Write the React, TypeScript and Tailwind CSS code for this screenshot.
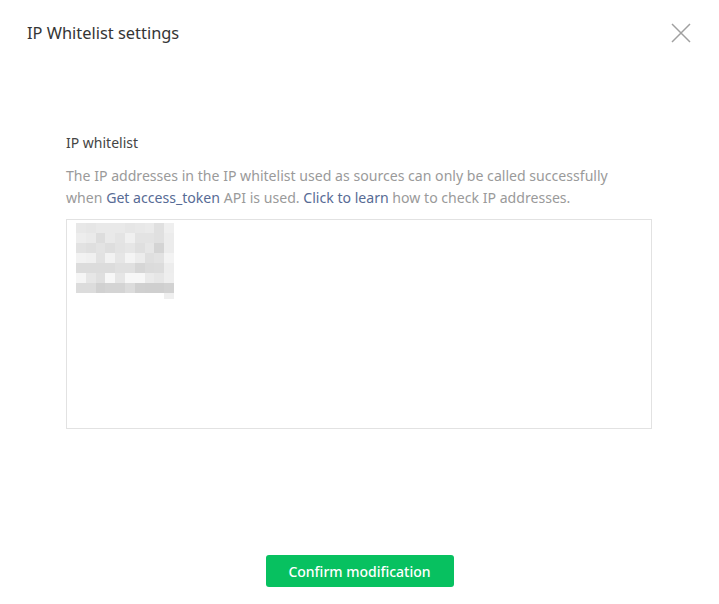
import React from "react";

const cells: string[][] = [
  ["#e8e8e8", "#e6e6e6", "#e9e9e9", "#e9e9e9", "#e9e9e9", "#e6e6e6", "#e8e8e8", "#eaeaea", "#e0e0e0", "#efefef"],
  ["#ededed", "#eaeaea", "#dddddd", "#e9e9e9", "#e4e4e4", "#f0f0f0", "#e3e3e3", "#e3e3e3", "#e0e0e0", "#ececec"],
  ["#e2e2e2", "#dfdfdf", "#e3e3e3", "#dedede", "#e3e3e3", "#e6e6e6", "#dfdfdf", "#e6e6e6", "#d4d4d4", "#ececec"],
  ["#f2f2f2", "#f0f0f0", "#e2e2e2", "#f2f2f2", "#e6e6e6", "#f4f4f4", "#ececec", "#dfdfdf", "#e2e2e2", "#f3f3f3"],
  ["#dcdcdc", "#dcdcdc", "#dcdcdc", "#dcdcdc", "#e0e0e0", "#e0e0e0", "#d6d6d6", "#dbdbdb", "#dcdcdc", "#ededed"],
  ["#f5f5f5", "#e6e6e6", "#dfdfdf", "#f7f7f7", "#e6e6e6", "#f7f7f7", "#f7f7f7", "#eaeaea", "#e6e6e6", "#eeeeee"],
  ["#dcdcdc", "#dcdcdc", "#d1d1d1", "#d4d4d4", "#d4d4d4", "#dcdcdc", "#d0d0d0", "#cfcfcf", "#cfcfcf", "#d2d2d2"],
];

function Mosaic() {
  return (
    <div className="flex flex-col">
      {cells.map((row, i) => (
        <div key={i} className="flex h-[10px]">
          {row.map((c, j) => (
            <div key={j} className="h-full w-[9.8px]" style={{ backgroundColor: c }} />
          ))}
        </div>
      ))}
      <div className="flex h-[6px]">
        <div className="w-[88.2px]" />
        <div className="h-full w-[9.8px] bg-[#efefef]" />
      </div>
    </div>
  );
}

export default function App() {
  return (
    <div
      className="relative h-[604px] w-[719px] bg-white"
      style={{ fontFamily: '"Noto Sans", "Open Sans", sans-serif' }}
    >
      <div className="flex h-[66px] items-center justify-between pl-[27px] pr-[28px]">
        <h1 className="text-[16.4px] font-normal text-[#353535]">IP Whitelist settings</h1>
        <svg width="20" height="20" viewBox="0 0 20 20" className="text-[#a0a0a0]">
          <path d="M1 1 L19 19 M19 1 L1 19" stroke="currentColor" strokeWidth="1.5" fill="none" />
        </svg>
      </div>
      <div className="px-[66px] pt-[66px]">
        <div className="text-[14px] leading-[22px] text-[#444444]">IP whitelist</div>
        <p className="mt-[11px] max-w-[565px] text-[14.1px] leading-[22px] text-[#9a9a9a]">
          The IP addresses in the IP whitelist used as sources can only be called successfully when{" "}
          <span className="text-[#576b95]">Get access_token</span> API is used.{" "}
          <span className="text-[#576b95]">Click to learn</span> how to check IP addresses.
        </p>
        <div className="mt-[10px] h-[210px] w-[586px] border border-[#e2e2e2] pl-[9px] pt-[3px]">
          <Mosaic />
        </div>
      </div>
      <div className="mt-[126px] flex justify-center">
        <button className="h-[32px] w-[188px] rounded-[3px] bg-[#07c160] text-[14px] font-medium text-white">
          Confirm modification
        </button>
      </div>
    </div>
  );
}
